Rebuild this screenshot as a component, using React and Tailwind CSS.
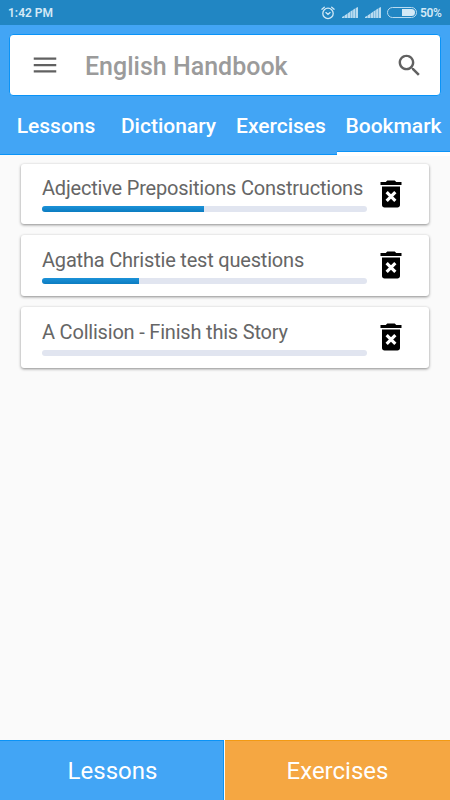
import React, { useState } from "react";

const tabs = [
  { name: "Lessons", className: "w-[112px]" },
  { name: "Dictionary", className: "w-[113px]" },
  { name: "Exercises", className: "w-[112px]" },
  { name: "Bookmark", className: "w-[113px]" },
];

const bookmarks = [
  { title: "Adjective Prepositions Constructions", progress: 50 },
  { title: "Agatha Christie test questions", progress: 30 },
  { title: "A Collision - Finish this Story", progress: 0 },
];

const SignalIcon = () => (
  <svg className="w-4 h-[11px]" viewBox="0 0 16 11" fill="#b9dbf0">
    <path d="M0 11V10L2.6 8.6V11Z" />
    <path d="M2.9 11V8.2L5.3 6.8V11Z" />
    <path d="M5.6 11V6.4L8 4.8V11Z" />
    <path d="M8.4 11V4.5L10.7 3V11Z" />
    <path d="M11.1 11V2.8L13.4 1.3V11Z" />
    <path d="M13.8 11V1L16 0V11Z" />
  </svg>
);

const AlarmIcon = () => (
  <svg
    className="w-[14px] h-[14px]"
    viewBox="0 0 14 14"
    fill="none"
    stroke="#d3e9f6"
    strokeWidth="1.3"
    strokeLinecap="round"
  >
    <circle cx="7" cy="7.4" r="5.2" />
    <path d="M4.9 6.6L7 8.3L9.1 6.6" />
    <path d="M0.9 3.2L3.3 1.2M13.1 3.2L10.7 1.2" />
  </svg>
);

const TrashIcon = () => (
  <svg className="w-9 h-9" viewBox="0 0 24 24">
    <path
      fill="#000"
      d="M6 19.3c0 1 .7 1.7 1.7 1.7h8.6c1 0 1.7-.7 1.7-1.7V7H6v12.3zM19 4h-3.5l-1-1h-5l-1 1H5v2h14V4z"
    />
    <path
      stroke="#fff"
      strokeWidth="2.1"
      d="M9.1 10.8L14.9 16.6M14.9 10.8L9.1 16.6"
    />
  </svg>
);

const BookmarkCard = ({ title, progress }) => (
  <div className="flex h-[60.6px] bg-white rounded-[3px] pl-[21px] shadow-[0_1px_3px_rgba(0,0,0,0.45)]">
    <div className="w-[324.5px] shrink-0 pt-[10.5px]">
      <h2 className="text-[20px] leading-[28px] tracking-[-0.2px] text-[#666666] whitespace-nowrap">
        {title}
      </h2>
      <div className="mt-[4px] h-[6px] rounded-full bg-[#e1e5f0] overflow-hidden">
        <div
          className="h-full bg-gradient-to-b from-[#1c92d8] to-[#0b7cc1]"
          style={{ width: `${progress}%` }}
        ></div>
      </div>
    </div>
    <button className="ml-[6px] mt-[12px] h-9 w-9">
      <TrashIcon />
    </button>
  </div>
);

const App = () => {
  const [activeTab, setActiveTab] = useState("Bookmark");

  return (
    <div className="flex flex-col w-[450px] h-[800px] bg-[#fafafa] font-[Roboto,sans-serif] overflow-hidden">
      {/* Status bar */}
      <div className="flex h-[25px] shrink-0 items-center bg-[#2186c3] pl-2 pr-[8px] text-[12px] font-semibold text-[#d3e9f6]">
        <span className="flex-1">1:42 PM</span>
        <AlarmIcon />
        <span className="ml-[7px]">
          <SignalIcon />
        </span>
        <span className="ml-[7px]">
          <SignalIcon />
        </span>
        <span className="ml-[6px] mr-[3px] flex h-[11px] w-[30px] justify-end rounded-full border border-[#b9dbf0] p-px">
          <span className="w-[13px] rounded-r-full bg-[#d3e9f6]"></span>
        </span>
        <span className="w-[22px] tracking-[-0.3px]">50%</span>
      </div>

      {/* Header */}
      <header className="h-[130px] shrink-0 bg-[#42a5f5] border-b border-[#0a93f7] pt-[9px]">
        <div className="mx-[9px] flex h-[62px] items-center rounded-[4px] border border-[#0a93f7] bg-white pl-[20px] pr-[16px]">
          <svg className="w-[30px] h-[30px]" viewBox="0 0 24 24" fill="#616161">
            <path d="M3 18h18v-1.8H3V18zm0-5.1h18v-1.8H3v1.8zM3 6v1.8h18V6H3z" />
          </svg>
          <h1 className="flex-1 pl-[25px] pt-[3px] text-[25px] font-medium text-[#9b9b9b]">
            English Handbook
          </h1>
          <svg className="w-[29px] h-[29px]" viewBox="0 0 24 24" fill="#616161">
            <path d="M15.5 14h-.79l-.28-.27C15.41 12.59 16 11.11 16 9.5 16 5.91 13.09 3 9.5 3S3 5.91 3 9.5 5.91 16 9.5 16c1.61 0 3.09-.59 4.23-1.57l.27.28v.79l5 4.99L20.49 19l-4.99-5zm-6 0C7.01 14 5 11.99 5 9.5S7.01 5 9.5 5 14 7.01 14 9.5 11.99 14 9.5 14z" />
          </svg>
        </div>

        {/* Tabs */}
        <nav className="flex h-[59px]">
          {tabs.map((tab) => (
            <button
              key={tab.name}
              onClick={() => setActiveTab(tab.name)}
              className={`flex shrink-0 flex-col text-[21px] font-medium text-white ${tab.className}`}
            >
              <span className="flex h-[55px] w-full items-center justify-center pt-[7px]">
                {tab.name}
              </span>
              {activeTab === tab.name && (
                <span className="h-[4px] w-full shrink-0 border-t border-[#0a93f7] bg-white shadow-[0_1px_0_#fff]"></span>
              )}
            </button>
          ))}
        </nav>
      </header>

      {/* Bookmarks */}
      <main className="flex flex-1 flex-col gap-[11.1px] pl-[21px] pr-[21px] pt-[8.7px]">
        {bookmarks.map((item) => (
          <BookmarkCard key={item.title} {...item} />
        ))}
      </main>

      {/* Bottom buttons */}
      <footer className="flex h-[60px] shrink-0 gap-[1px] bg-[#fafafa] text-[24px] text-white">
        <button className="w-[224px] border-t border-r border-[#0a93f7] bg-[#42a5f5] pt-[1px] pl-[2px]">
          Lessons
        </button>
        <button className="w-[225px] border-t border-[#f39a12] bg-[#f5a742] pt-[1px]">
          Exercises
        </button>
      </footer>
    </div>
  );
};

export default App;
